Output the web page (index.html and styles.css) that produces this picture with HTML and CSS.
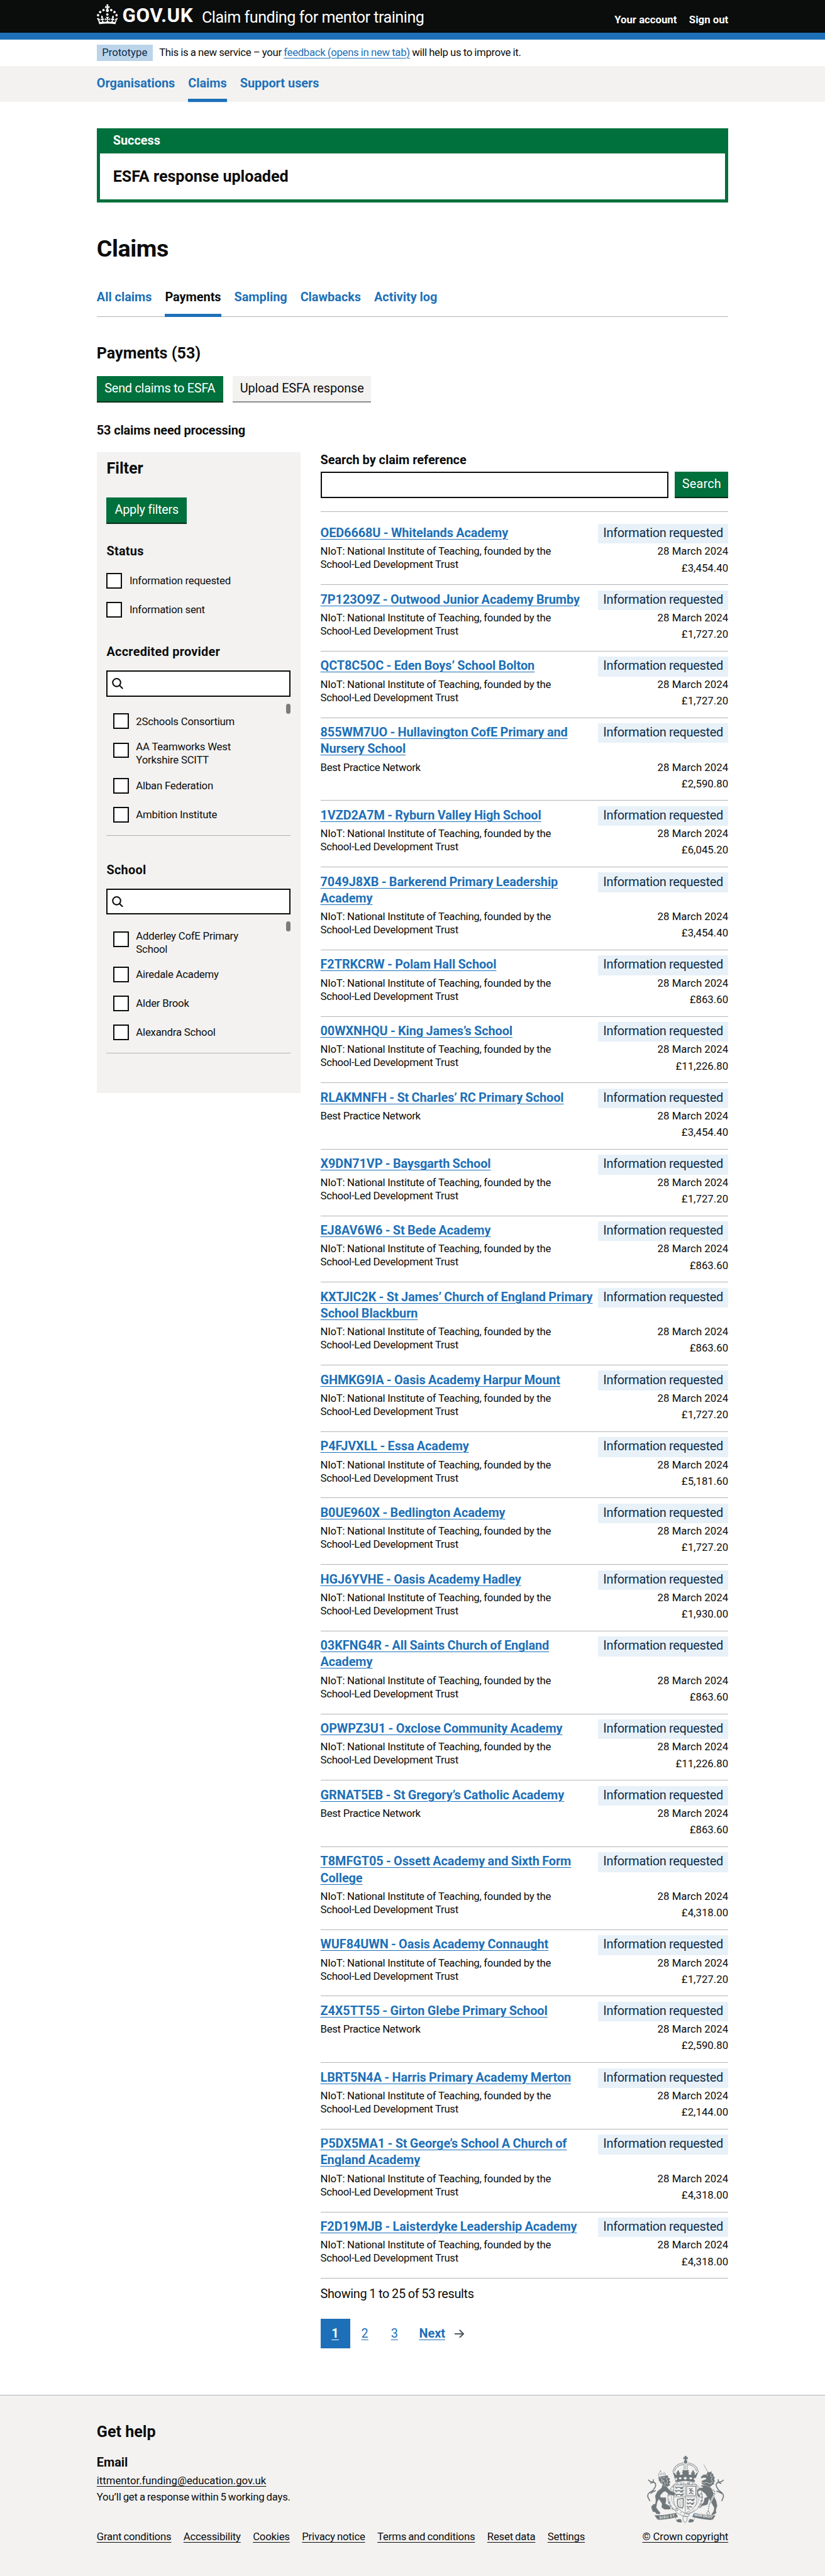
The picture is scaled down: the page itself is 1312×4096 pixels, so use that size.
FILE: index.html
```
<!DOCTYPE html>
<html lang="en">
<head>
<meta charset="utf-8">
<title>Claims - Claim funding for mentor training - GOV.UK</title>
<link rel="stylesheet" href="styles.css">
</head>
<body>
<header class="header">
  <div class="container header-row">
    <svg class="crown" viewBox="0 0 32 30" aria-hidden="true"><path fill="#fff" d="M22.6 10.4c-1 .4-2-.1-2.4-1-.4-.9.1-2 1-2.4.9-.4 2 .1 2.4 1s-.1 2-1 2.4m-5.9 6.7c-.9.4-2-.1-2.4-1-.4-.9.1-2 1-2.4.9-.4 2 .1 2.4 1s-.1 2-1 2.4m10.8-3.7c-1 .4-2-.1-2.4-1-.4-.9.1-2 1-2.4.9-.4 2 .1 2.4 1s0 2-1 2.4m3.3 4.8c-1 .4-2-.1-2.4-1-.4-.9.1-2 1-2.4.9-.4 2 .1 2.4 1s-.1 2-1 2.4M17 4.7l2.3 1.2V2.5l-2.3.7-.2-.2.9-3h-3.4l.9 3-.2.2c-.1.1-2.3-.7-2.3-.7v3.4L15 4.7c.1.1.1.2.2.2l-1.3 4c-.1.2-.1.4-.1.6 0 1.1.8 2 1.9 2.2h.7c1-.2 1.9-1.1 1.9-2.1 0-.2 0-.4-.1-.6l-1.3-4c-.1-.2 0-.2.1-.3m-7.6 5.7c.9.4 2-.1 2.4-1 .4-.9-.1-2-1-2.4-.9-.4-2 .1-2.4 1s0 2 1 2.4m-5 3c.9.4 2-.1 2.4-1 .4-.9-.1-2-1-2.4-.9-.4-2 .1-2.4 1s.1 2 1 2.4m-3.2 4.8c.9.4 2-.1 2.4-1 .4-.9-.1-2-1-2.4-.9-.4-2 .1-2.4 1s0 2 1 2.4m14.8 11c4.4 0 8.6.3 12.3.8 1.1-4.5 2.4-7 3.7-8.8l-2.5-.9c.2 1.3.3 1.9 0 2.7-.4-.4-.8-1.1-1.1-2.3l-1.2 4c.7-.5 1.3-.8 2-.9-1.1 2.5-2.6 3.1-3.5 3-1.1-.2-1.7-1.2-1.5-2.1.3-1.2 1.5-1.5 2.1-.1 1.1-2.3-.8-3-2-2.3 1.9-1.9 2.1-3.5.6-5.6-2.1 1.6-2.1 3.2-1.2 5.5-1.2-1.4-3.2-.6-2.5 1.6.9-1.4 2.1-.5 1.9.8-.2 1.1-1.7 2.1-3.5 1.9-2.7-.2-2.9-2.1-2.9-3.6.7-.1 1.9.5 2.9 1.9l.4-4.3c-1.1 1.1-2.1 1.4-3.2 1.4.4-1.2 2.1-3 2.1-3h-5.4s1.7 1.9 2.1 3c-1.1 0-2.1-.2-3.2-1.4l.4 4.3c1-1.4 2.2-2 2.9-1.9-.1 1.5-.2 3.4-2.9 3.6-1.9.2-3.4-.8-3.5-1.9-.2-1.3 1-2.2 1.9-.8.7-2.3-1.2-3-2.5-1.6.9-2.2.9-3.9-1.2-5.5-1.5 2-1.3 3.7.6 5.6-1.2-.7-3.1 0-2 2.3.6-1.4 1.8-1.1 2.1.1.2.9-.3 1.9-1.5 2.1-.9.2-2.4-.5-3.5-3 .6 0 1.2.3 2 .9l-1.2-4c-.3 1.1-.7 1.9-1.1 2.3-.3-.8-.2-1.4 0-2.7l-2.9.9C1.3 23 2.6 25.5 3.7 30c3.7-.5 7.9-.8 12.3-.8"/></svg>
    <span class="wordmark">GOV.UK</span>
    <span class="service">Claim funding for mentor training</span>
    <nav class="account"><a>Your account</a><a>Sign out</a></nav>
  </div>
</header>
<div class="container phase">
  <strong class="phase-tag">Prototype</strong>
  <span class="phase-text">This is a new service – your <a class="link">feedback (opens in new tab)</a> will help us to improve it.</span>
</div>
<nav class="primary"><div class="container primary-row"><a>Organisations</a><a class="current">Claims</a><a>Support users</a></div></nav>
<main class="container main">
  <section class="banner"><h2>Success</h2><p>ESFA response uploaded</p></section>
  <h1>Claims</h1>
  <nav class="sub"><a>All claims</a><a class="current">Payments</a><a>Sampling</a><a>Clawbacks</a><a>Activity log</a></nav>
  <h2 class="title">Payments (53)</h2>
  <div class="buttons"><button class="btn w192">Send claims to ESFA</button><button class="btn grey w210">Upload ESFA response</button></div>
  <h3 class="pending">53 claims need processing</h3>
  <div class="columns">
    <aside class="filter">
      <h2>Filter</h2>
      <button class="btn w122">Apply filters</button>
      <h3>Status</h3>
      <div class="checks"><label><i></i><span>Information requested</span></label><label><i></i><span>Information sent</span></label></div>
      <h3 class="gap30">Accredited provider</h3>
      <div class="find"><svg viewBox="0 0 17 17"><circle cx="7.2" cy="7" r="6" /><path d="M11.5 11.3l5 5"/></svg></div>
      <div class="scroller"><b class="thumb"></b><label><i></i><span>2Schools Consortium</span></label><label><i></i><span>AA Teamworks West<br>Yorkshire SCITT</span></label><label><i></i><span>Alban Federation</span></label><label><i></i><span>Ambition Institute</span></label></div>
      <h3 class="gap40">School</h3>
      <div class="find"><svg viewBox="0 0 17 17"><circle cx="7.2" cy="7" r="6" /><path d="M11.5 11.3l5 5"/></svg></div>
      <div class="scroller"><b class="thumb"></b><label><i></i><span>Adderley CofE Primary<br>School</span></label><label><i></i><span>Airedale Academy</span></label><label><i></i><span>Alder Brook</span></label><label><i></i><span>Alexandra School</span></label></div>
    </aside>
    <section class="results">
      <h3>Search by claim reference</h3>
      <div class="search"><div class="input"></div><button class="btn w81">Search</button></div>
      <div class="list">
<article><a class="link">OED6668U - Whitelands Academy</a><em>Information requested</em><p>NIoT: National Institute of Teaching, founded by the<br>School-Led Development Trust</p><div><span>28 March 2024</span><span>£3,454.40</span></div></article>
<article><a class="link">7P123O9Z - Outwood Junior Academy Brumby</a><em>Information requested</em><p>NIoT: National Institute of Teaching, founded by the<br>School-Led Development Trust</p><div><span>28 March 2024</span><span>£1,727.20</span></div></article>
<article><a class="link">QCT8C5OC - Eden Boys’ School Bolton</a><em>Information requested</em><p>NIoT: National Institute of Teaching, founded by the<br>School-Led Development Trust</p><div><span>28 March 2024</span><span>£1,727.20</span></div></article>
<article><a class="link">855WM7UO - Hullavington CofE Primary and<br>Nursery School</a><em>Information requested</em><p>Best Practice Network</p><div><span>28 March 2024</span><span>£2,590.80</span></div></article>
<article><a class="link">1VZD2A7M - Ryburn Valley High School</a><em>Information requested</em><p>NIoT: National Institute of Teaching, founded by the<br>School-Led Development Trust</p><div><span>28 March 2024</span><span>£6,045.20</span></div></article>
<article><a class="link">7049J8XB - Barkerend Primary Leadership<br>Academy</a><em>Information requested</em><p>NIoT: National Institute of Teaching, founded by the<br>School-Led Development Trust</p><div><span>28 March 2024</span><span>£3,454.40</span></div></article>
<article><a class="link">F2TRKCRW - Polam Hall School</a><em>Information requested</em><p>NIoT: National Institute of Teaching, founded by the<br>School-Led Development Trust</p><div><span>28 March 2024</span><span>£863.60</span></div></article>
<article><a class="link">00WXNHQU - King James’s School</a><em>Information requested</em><p>NIoT: National Institute of Teaching, founded by the<br>School-Led Development Trust</p><div><span>28 March 2024</span><span>£11,226.80</span></div></article>
<article><a class="link">RLAKMNFH - St Charles’ RC Primary School</a><em>Information requested</em><p>Best Practice Network</p><div><span>28 March 2024</span><span>£3,454.40</span></div></article>
<article><a class="link">X9DN71VP - Baysgarth School</a><em>Information requested</em><p>NIoT: National Institute of Teaching, founded by the<br>School-Led Development Trust</p><div><span>28 March 2024</span><span>£1,727.20</span></div></article>
<article><a class="link">EJ8AV6W6 - St Bede Academy</a><em>Information requested</em><p>NIoT: National Institute of Teaching, founded by the<br>School-Led Development Trust</p><div><span>28 March 2024</span><span>£863.60</span></div></article>
<article><a class="link">KXTJIC2K - St James’ Church of England Primary<br>School Blackburn</a><em>Information requested</em><p>NIoT: National Institute of Teaching, founded by the<br>School-Led Development Trust</p><div><span>28 March 2024</span><span>£863.60</span></div></article>
<article><a class="link">GHMKG9IA - Oasis Academy Harpur Mount</a><em>Information requested</em><p>NIoT: National Institute of Teaching, founded by the<br>School-Led Development Trust</p><div><span>28 March 2024</span><span>£1,727.20</span></div></article>
<article><a class="link">P4FJVXLL - Essa Academy</a><em>Information requested</em><p>NIoT: National Institute of Teaching, founded by the<br>School-Led Development Trust</p><div><span>28 March 2024</span><span>£5,181.60</span></div></article>
<article><a class="link">B0UE960X - Bedlington Academy</a><em>Information requested</em><p>NIoT: National Institute of Teaching, founded by the<br>School-Led Development Trust</p><div><span>28 March 2024</span><span>£1,727.20</span></div></article>
<article><a class="link">HGJ6YVHE - Oasis Academy Hadley</a><em>Information requested</em><p>NIoT: National Institute of Teaching, founded by the<br>School-Led Development Trust</p><div><span>28 March 2024</span><span>£1,930.00</span></div></article>
<article><a class="link">03KFNG4R - All Saints Church of England<br>Academy</a><em>Information requested</em><p>NIoT: National Institute of Teaching, founded by the<br>School-Led Development Trust</p><div><span>28 March 2024</span><span>£863.60</span></div></article>
<article><a class="link">OPWPZ3U1 - Oxclose Community Academy</a><em>Information requested</em><p>NIoT: National Institute of Teaching, founded by the<br>School-Led Development Trust</p><div><span>28 March 2024</span><span>£11,226.80</span></div></article>
<article><a class="link">GRNAT5EB - St Gregory’s Catholic Academy</a><em>Information requested</em><p>Best Practice Network</p><div><span>28 March 2024</span><span>£863.60</span></div></article>
<article><a class="link">T8MFGT05 - Ossett Academy and Sixth Form<br>College</a><em>Information requested</em><p>NIoT: National Institute of Teaching, founded by the<br>School-Led Development Trust</p><div><span>28 March 2024</span><span>£4,318.00</span></div></article>
<article><a class="link">WUF84UWN - Oasis Academy Connaught</a><em>Information requested</em><p>NIoT: National Institute of Teaching, founded by the<br>School-Led Development Trust</p><div><span>28 March 2024</span><span>£1,727.20</span></div></article>
<article><a class="link">Z4X5TT55 - Girton Glebe Primary School</a><em>Information requested</em><p>Best Practice Network</p><div><span>28 March 2024</span><span>£2,590.80</span></div></article>
<article><a class="link">LBRT5N4A - Harris Primary Academy Merton</a><em>Information requested</em><p>NIoT: National Institute of Teaching, founded by the<br>School-Led Development Trust</p><div><span>28 March 2024</span><span>£2,144.00</span></div></article>
<article><a class="link">P5DX5MA1 - St George’s School A Church of<br>England Academy</a><em>Information requested</em><p>NIoT: National Institute of Teaching, founded by the<br>School-Led Development Trust</p><div><span>28 March 2024</span><span>£4,318.00</span></div></article>
<article><a class="link">F2D19MJB - Laisterdyke Leadership Academy</a><em>Information requested</em><p>NIoT: National Institute of Teaching, founded by the<br>School-Led Development Trust</p><div><span>28 March 2024</span><span>£4,318.00</span></div></article>
      </div>
      <p class="showing">Showing 1 to 25 of 53 results</p>
      <nav class="pages"><a class="on link">1</a><a class="link">2</a><a class="link">3</a><span class="next"><a class="link">Next</a><svg viewBox="0 0 15 13"><path fill="#505a5f" d="m8.107-0.0078125-1.4136 1.414 4.2926 4.293h-12.986v2h12.896l-4.1855 3.9766 1.377 1.4492 6.7441-6.4062-6.7246-6.7266z"/></svg></span></nav>
    </section>
  </div>
</main>
<footer class="footer">
  <div class="container">
    <h2>Get help</h2>
    <div class="foot-row">
      <div class="foot-left">
        <h3>Email</h3>
        <a class="link mail">ittmentor.funding@education.gov.uk</a>
        <p>You’ll get a response within 5 working days.</p>
        <div class="foot-links"><a class="link">Grant conditions</a><a class="link">Accessibility</a><a class="link">Cookies</a><a class="link">Privacy notice</a><a class="link">Terms and conditions</a><a class="link">Reset data</a><a class="link">Settings</a></div>
      </div>
      <div class="foot-right">
        <svg class="crest" viewBox="65 40 680 595" aria-hidden="true">
          <defs><path id="ring" d="M308 508A134 127 0 1 1 486 518"/></defs>
          <g fill="#6f777b">
            <!-- cross and orb -->
            <path d="M397 45h20l-4 14 13-4v20l-13-4 4 15h-20l4-15-13 4V55l13 4z"/><circle cx="407" cy="98" r="15"/>
            <!-- crown rim and fleurs -->
            <path d="M296 186l18 12 8 14q10-2 8-10l-8-6q8-14 12 0-4-16 8-28 12 12 8 28 4-14 12 0l-8 6q0 10 14 10 14-2 14-14l-10-12 12 2-6-18h58l-6 18 12-2-10 12q0 12 14 14 14 0 14-10l-8-6q8-14 12 0-4-16 8-28 12 12 8 28 4-14 12 0l-8 6q0 8 8 10l8-14 18-12-26 62-6 26q-82-20-166 0l-6-26z"/>
            <!-- banners -->
            <path d="M135 564q90 2 188-20l18 36q-80 20-160 24l-20-4z"/><path d="M668 566q-90-2-186-22l-18 34q80 22 158 28l24-6z"/>
            <path d="M328 606q10-12 38-8l10 26q-30 4-44-4z"/><path d="M478 606q-10-12-38-8l-10 26q30 4 44-4z"/>
          </g>
          <g fill="#f3f2f1"><ellipse cx="360" cy="241" rx="13" ry="9"/><ellipse cx="452" cy="241" rx="13" ry="9"/><path d="M404 226l16 14-16 14-16-14zM324 234l11 14-11 14-8-14zM488 234l8 14-8 14-11-14z"/></g>
          <!-- arches, tails and horn -->
          <g fill="none" stroke="#6f777b">
            <path d="M297 182Q312 118 386 107M518 182Q504 118 428 107" stroke-width="8" stroke-dasharray="1 11" stroke-linecap="round"/>
            <path d="M310 182Q322 130 388 120M504 182Q492 130 426 120" stroke-width="5"/>
            <path d="M394 112v56M421 112v56" stroke-width="4"/><path d="M407 122v44" stroke-width="6" stroke-dasharray="6 5"/>
            <path d="M82 254q16 22 44 20 26 10 18 38l-20 34-34 22q-18 16-12 38l18 34M124 250l2 26-28 8M146 348l-30 14-14 12" stroke-width="9"/>
            <path d="M738 254q-16 22-44 20-26 10-18 38l20 34 28 22q18 16 12 38l-14 34M692 250l2 26 24 12M676 352l34 14 14 10" stroke-width="9"/>
            <path d="M566 124l36 62" stroke-width="5" stroke-dasharray="7 2"/>
          </g>
          <path d="M172 222q-8-24 14-32M230 216q2-20-14-28M186 214v-14M200 212v-20M214 212v-16M187 172v14M180 178h14" fill="none" stroke="#6f777b" stroke-width="4"/>
          <!-- garter -->
          <ellipse cx="403" cy="406" rx="150" ry="144" fill="#f3f2f1" stroke="#6f777b" stroke-width="4"/>
          <ellipse cx="403" cy="406" rx="120" ry="116" fill="none" stroke="#6f777b" stroke-width="3"/>
          <text font-family="Roboto, sans-serif" font-weight="500" font-size="29" fill="#6f777b" textLength="590"><textPath href="#ring">HONI SOIT QUI MAL Y PENSE</textPath></text>
          <!-- shield -->
          <path d="M303 299h202v132q0 76-102 116-100-40-100-116z" fill="#f3f2f1" stroke="#6f777b" stroke-width="4"/>
          <path d="M404 299v244M304 403h200" fill="none" stroke="#6f777b" stroke-width="4"/>
          <rect x="416" y="311" width="80" height="80" fill="none" stroke="#6f777b" stroke-width="5"/>
          <g fill="none" stroke="#6f777b" stroke-width="8">
            <path d="M314 314l14 10 18-6 20 6 26-10M322 330l10-6M362 332l24-4M314 344l14 10 18-6 20 6 26-10M322 360l10-6M362 362l24-4M314 376l14 10 18-6 20 6 26-10M322 394l10-6M362 392l24-4"/>
            <path d="M436 328l14 12 16-12M440 350l22-4 14 12M452 346l4 24 18 6M436 376l18-10"/>
            <path d="M416 420l12 10 18-6 18 6 24-10M416 452l12 10 18-6 18 6 20-10M416 484l12 10 18-6 18 6M424 436l10-6M458 436l24-2M424 468l10-6M456 470l22-4M420 506l22 4"/>
          </g>
          <path d="M338 424l48-8v70l-8 16-36-14q-12-30-4-64z" fill="none" stroke="#6f777b" stroke-width="8"/>
          <path d="M346 436l28 34M346 452l24 30M350 470l16 18M360 430l16 22" stroke="#6f777b" stroke-width="3"/>
          <g fill="#6f777b" stroke="#f3f2f1" stroke-width="2">
            <!-- lion -->
            <path d="M206 290L240 310 268 345 318 368 312 396 262 384 232 356 212 362 186 392 190 408 236 408 238 440 232 462 262 478 278 500 270 514 222 514 196 496 200 462 174 424 160 450 152 496 168 520 186 540 182 556 150 552 140 536 122 536 112 514 106 490 122 470 142 462 146 430 140 396 160 356 196 326z"/>
            <path d="M168 228L252 214 256 234 272 246 264 258 276 274 266 286 272 302 250 314 212 306 206 290 190 284 174 262z"/>
            <!-- unicorn -->
            <path d="M536 304Q600 290 634 330L656 380 662 410 676 440 684 480 672 520 676 545 648 562 628 562 650 530 656 500 640 470 620 440 612 420 600 470 584 476 548 484 540 500 530 496 548 466 564 450 572 412 596 404 578 376 540 346 520 352 516 372 536 396 524 412 508 384 506 348 524 326 560 322z"/>
            <path d="M538 232L560 210 590 206 600 182 612 188 636 180 634 196 652 204 648 218 664 236 656 248 664 266 654 276 656 294 640 300 620 318 548 292 546 264 586 248 584 238 560 236 548 244z"/>
          </g>
          <g fill="none" stroke="#f3f2f1" stroke-width="4"><path d="M178 236h18M208 234h20M202 240l-6 18 22 2M190 270q20 8 30-6M224 274l4 28M250 234l-12 16 14 14-10 16 12 16M630 204l-6 18 16 12-10 18 12 16-12 18M548 276l22 8 20-8 22 12 24-4"/></g>
          <circle cx="596" cy="214" r="4" fill="#f3f2f1"/>
          <!-- belt -->
          <path d="M322 502q20-8 34 12 30 34 84 44l-10 18q-64-6-106-40-14-20-2-34z" fill="#f3f2f1" stroke="#6f777b" stroke-width="4"/>
          <path d="M430 556q34-12 58-46M318 582q6 30 18 40M488 582q-6 30-18 40" fill="none" stroke="#6f777b" stroke-width="3"/>
          <circle cx="366" cy="540" r="4" fill="#6f777b"/><circle cx="398" cy="556" r="4" fill="#6f777b"/><circle cx="334" cy="516" r="8" fill="none" stroke="#6f777b" stroke-width="4"/>
          <path d="M384 572v34q18 42 36 0v-30z" fill="#f3f2f1" stroke="#6f777b" stroke-width="4"/>
          <!-- chain -->
          <path d="M640 340q30 10 20 40l-24 46-24 48-8 60" fill="none" stroke="#f3f2f1" stroke-width="14"/>
          <path d="M640 340q30 10 20 40l-24 46-24 48-8 60" fill="none" stroke="#6f777b" stroke-width="6" stroke-dasharray="14 6"/>
          <circle cx="604" cy="545" r="13" fill="#f3f2f1" stroke="#6f777b" stroke-width="4"/>
          <text x="180" y="597" transform="rotate(-8 180 597)" font-family="Roboto, sans-serif" font-weight="700" font-size="31" fill="#f3f2f1" textLength="136">DIEU ET</text>
          <text x="482" y="569" transform="rotate(8 482 569)" font-family="Roboto, sans-serif" font-weight="700" font-size="30" fill="#f3f2f1" textLength="162" lengthAdjust="spacingAndGlyphs">MON DROIT</text>
        </svg>
        <a class="link">© Crown copyright</a>
      </div>
    </div>
  </div>
</footer>
</body>
</html>
```
FILE: styles.css
```
html { background: #f3f2f1; }
body { margin: 0; zoom: 1.04625; width: 1254px; background: #fff; color: #0b0c0c; font: 19px/25px Roboto, "Liberation Sans", sans-serif; }
h1, h2, h3, p { margin: 0; }
h3 { font-size: 19px; line-height: 25px; }
.container { width: 960px; margin: 0 auto; }
.link { color: #1d70b8; text-decoration: underline; text-decoration-thickness: 1px; text-underline-offset: 3px; }

.header { height: 60px; background: linear-gradient(#0b0c0c 50px, #1d70b8 50px); color: #fff; }
.header-row { display: flex; align-items: flex-start; }
.crown { width: 32px; height: 30px; margin-top: 7px; flex: none; }
.wordmark { font-size: 30px; line-height: 34px; font-weight: 700; margin: 7px 0 0 7px; width: 120.8px; letter-spacing: .5px; }
.service { font-size: 24px; line-height: 30px; margin-top: 11.5px; letter-spacing: -.46px; }
.account { margin-left: auto; display: flex; gap: 18.6px; font-size: 16px; line-height: 20px; font-weight: 700; margin-top: 20px; }

.phase { display: flex; height: 40px; box-sizing: border-box; padding-top: 8px; font-size: 16px; line-height: 20px; }
.phase-tag { font-weight: 400; background: #bbd4ea; color: #0c2d4a; padding: 2px 8px 3px; height: 20px; width: 69px; margin-right: 10px; }
.phase-text { padding-top: 2px; letter-spacing: -.29px; word-spacing: -.4px; }
.primary { background: #f3f2f1; height: 55px; }
.primary-row { display: flex; gap: 20px; }
.primary a, .sub a { color: #1d70b8; font-weight: 700; }
.primary a { padding: 15px 0 10px; height: 25px; box-shadow: 0 0 transparent; }
.primary .current { box-shadow: 0 5px #1d70b8; }

.main { padding: 40px 0 70.2px; }
.banner { border: 5px solid #00703c; border-top: 0; background: #00703c; }
.banner h2 { color: #fff; font-size: 19px; line-height: 25px; padding: 7px 20px 6px; }
.banner p { background: #fff; padding: 20px; font-size: 24px; line-height: 30px; font-weight: 700; }
h1 { font-size: 36px; line-height: 40px; margin: 50.3px 0 30px; letter-spacing: -.4px; }
.sub { display: flex; gap: 20px; box-shadow: inset 0 -1px #b1b4b6; margin-bottom: 40.2px; }
.sub a { padding: 12px 0; border-bottom: 5px solid transparent; }
.sub .current { color: #0b0c0c; border-color: #1d70b8; }
.title { font-size: 24px; line-height: 30px; margin-bottom: 20px; }
.buttons { display: flex; gap: 15px; margin-bottom: 30px; }
.btn { display: block; height: 38px; padding: 0; border: 0; background: #00703c; color: #fff; font: 19px/36px Roboto, sans-serif; letter-spacing: -.25px; box-shadow: 0 2px #002d18; margin-bottom: 2px; }
.grey { background: #f3f2f1; color: #0b0c0c; box-shadow: 0 2px #929191; letter-spacing: -.1px; }
.w192 { width: 192px; } .w210 { width: 210px; } .w122 { width: 122px; } .w81 { width: 81px; letter-spacing: .2px; }
.pending { margin-bottom: 20px; letter-spacing: -.1px; }
.columns { display: flex; justify-content: space-between; align-items: flex-start; }

.filter { width: 280px; background: #f3f2f1; padding: 10px 15px 60px; }
.filter h2 { font-size: 24px; line-height: 30px; margin-bottom: 29.2px; }
.filter h3 { margin: 32px 0 10px; letter-spacing: .25px; }
.filter h3.gap40 { margin: 40px 0 15px; }
.filter h3.gap30 { margin: 30px 0 15.2px; }
.filter label { display: flex; min-height: 44px; font-size: 16px; line-height: 20px; letter-spacing: -.2px; }
.filter label i { width: 20px; height: 20px; border: 2px solid #0b0c0c; background: #fff; margin: 10px 11px 0 0; flex: none; }
.filter label span { padding: 7px 0; align-self: center; }
.find { height: 36px; border: 2px solid #0b0c0c; background: #fff; margin-bottom: 10.3px; display: flex; align-items: center; }
.find svg { width: 17px; height: 17px; margin-left: 6px; fill: none; stroke: #0b0c0c; stroke-width: 2; }
.scroller { position: relative; height: 195px; padding: 5px 0 0 10px; border-bottom: 1px solid #b1b4b6; }
.thumb { position: absolute; right: 0; top: 0; width: 7px; height: 15px; border-radius: 3.5px; background: #7b7b79; }

.results { width: 620px; }
.results h3 { margin-bottom: 5.2px; }
.search { display: flex; gap: 10px; justify-content: space-between; margin-bottom: 20.1px; }
.input { flex: 1; height: 36px; border: 2px solid #0b0c0c; }
.list { border-top: 1px solid #b1b4b6; padding-top: 10px; }
article { display: grid; grid-template-columns: 1fr auto; border-bottom: 1px solid #b1b4b6; padding: 10px 0 15.09px; row-gap: 5px; }
article > a { font-weight: 700; letter-spacing: -.07px; word-spacing: -.45px; }
article em { font-style: normal; background: #e8f1f8; color: #0c2d4a; padding: 2px 8px 3px; margin: -2px 0 -3px; height: 25px; letter-spacing: -.27px; }
article p, article div { font-size: 16px; line-height: 20px; letter-spacing: -.27px; }
article div { display: flex; flex-direction: column; align-items: flex-end; gap: 5px; letter-spacing: .05px; }
.showing { margin: 10.8px 0 25.3px; letter-spacing: -.3px; word-spacing: -.6px; }
.pages { display: flex; }
.pages > a { width: 45px; line-height: 45px; text-align: center; }
.pages .on { background: #1d70b8; color: #fff; font-weight: 700; }
.next { padding-left: 15px; line-height: 45px; font-weight: 700; }
.next svg { width: 15px; height: 13px; margin-left: 14px; }

.footer { background: #f3f2f1; border-top: 1px solid #b1b4b6; padding: 40px 0 48px; }
.footer .link { color: #0b0c0c; }
.footer h2 { font-size: 24px; line-height: 30px; }
.foot-row { display: flex; justify-content: space-between; align-items: flex-end; font-size: 16px; line-height: 20px; }
.foot-left { padding-top: 20px; letter-spacing: -.2px; word-spacing: -.8px; }
.foot-left h3, .mail { letter-spacing: 0; }
.foot-left h3 { margin-bottom: 5px; }
.foot-left p { margin: 5px 0 40px; }
.foot-links { display: flex; gap: 18.6px; }
.foot-right { display: flex; flex-direction: column; align-items: center; letter-spacing: -.1px; }
.crest { width: 118.4px; height: 103.6px; margin-bottom: 10px; }
```
